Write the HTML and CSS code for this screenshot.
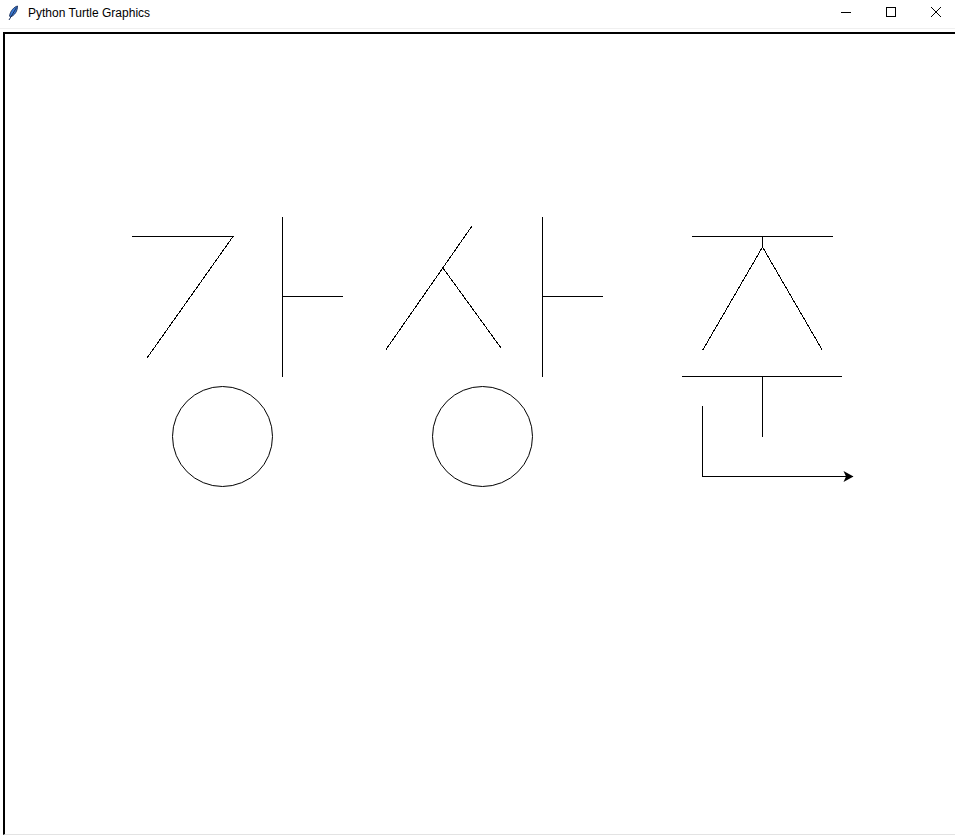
FILE: index.html
```html
<!DOCTYPE html>
<html lang="ko">
<head>
<meta charset="utf-8">
<title>Python Turtle Graphics</title>
<link rel="stylesheet" href="styles.css">
</head>
<body>
<div class="window">
  <header class="titlebar">
    <div class="title-left">
      <svg class="feather" width="12" height="16" viewBox="0 0 12 16">
        <path d="M10.5 1 C7 2 3.5 5.5 2.5 11 L3.5 12 C8 10 10.5 6 10.5 1 Z" fill="#3a7bd5" stroke="#1a2f5a" stroke-width="0.9"/>
        <path d="M9.5 2.5 L2 15" stroke="#1a2f5a" stroke-width="1" fill="none"/>
      </svg>
      <span class="title">Python Turtle Graphics</span>
    </div>
    <div class="controls">
      <span class="ctl"><svg width="12" height="12" viewBox="0 0 12 12"><path d="M1 6.5 H11" stroke="#000" stroke-width="1"/></svg></span>
      <span class="ctl"><svg width="12" height="12" viewBox="0 0 12 12"><rect x="1.5" y="1.5" width="9" height="9" fill="none" stroke="#000" stroke-width="1"/></svg></span>
      <span class="ctl"><svg width="12" height="12" viewBox="0 0 12 12"><path d="M1 1 L11 11 M11 1 L1 11" stroke="#000" stroke-width="1"/></svg></span>
    </div>
  </header>
  <main class="frame">
    <div class="canvas">
      <svg class="drawing" width="950" height="799" viewBox="5 34 950 799">
        <g stroke="#000" stroke-width="1" fill="none" shape-rendering="crispEdges">
          <!-- 가 -->
          <path d="M132 236.5 H233.5"/>
          <path d="M233 236.5 L147 358"/>
          <path d="M282.5 217 V377"/>
          <path d="M282 296.5 H343"/>
          <circle cx="222.5" cy="436.5" r="50" shape-rendering="auto"/>
          <!-- 상 -->
          <path d="M472 226 L386 349.5"/>
          <path d="M443 268 L501 348"/>
          <path d="M542.5 217 V377"/>
          <path d="M542 296.5 H603"/>
          <circle cx="482.5" cy="436.5" r="50" shape-rendering="auto"/>
          <!-- 좋 -->
          <path d="M692 236.5 H833"/>
          <path d="M762.5 236 V247"/>
          <path d="M762.5 247 L702.5 350.5"/>
          <path d="M762.5 247 L822.5 350.5"/>
          <path d="M682 376.5 H842"/>
          <path d="M762.5 376 V437"/>
          <path d="M702.5 406 V477"/>
          <path d="M702 476.5 H853"/>
        </g>
        <polygon points="853.5,476.5 843.5,471 846,476.5 843.5,482" fill="#000"/>
      </svg>
    </div>
  </main>
</div>
</body>
</html>
```

FILE: styles.css
```css
html, body {
  margin: 0;
  padding: 0;
  background: #ffffff;
}

.window {
  width: 955px;
  height: 836px;
  display: flex;
  flex-direction: column;
  background: #ffffff;
  overflow: hidden;
}

.titlebar {
  height: 28px;
  flex: 0 0 28px;
  display: flex;
  align-items: center;
  justify-content: space-between;
  background: #ffffff;
}

.title-left {
  display: flex;
  align-items: center;
  padding-left: 7px;
  padding-bottom: 3px;
}

.feather {
  display: block;
  margin-right: 9px;
}

.title {
  font-family: "Liberation Sans", Arial, sans-serif;
  font-size: 12px;
  color: #000000;
  line-height: 16px;
}

.controls {
  display: flex;
  align-items: center;
  padding-bottom: 4px;
  padding-right: 0;
}

.ctl {
  display: flex;
  width: 45px;
  box-sizing: border-box;
  padding-left: 6px;
  justify-content: center;
}

.ctl svg {
  display: block;
}

.frame {
  flex: 1;
  display: flex;
  flex-direction: column;
  border-top: 1px solid #f0f0f0;
  padding: 3px 0 1px 3px;
}

.canvas {
  flex: 1;
  border-top: 2px solid #000000;
  border-left: 2px solid #000000;
  border-bottom: 1px solid #e3e3e3;
  background: #ffffff;
  overflow: hidden;
}

.drawing {
  display: block;
}
```
